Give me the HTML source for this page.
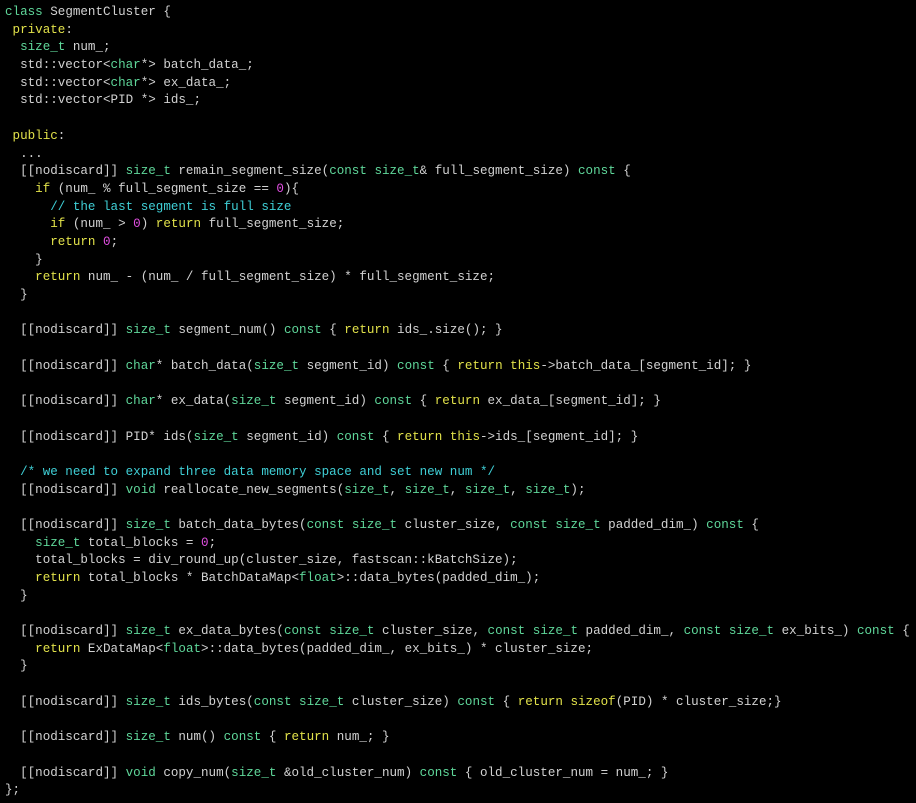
<!DOCTYPE html>
<html><head><meta charset="utf-8"><style>
html,body{margin:0;padding:0;background:#000;width:916px;height:803px;overflow:hidden}
pre{margin:0;padding:4px 0 0 5px;font-family:"Liberation Mono","DejaVu Sans Mono",monospace;font-size:12.57px;line-height:17.68px;color:#d2d2d2;white-space:pre}
.g{color:#5fd79a}.y{color:#e2e24a}.m{color:#e24fe2}.c{color:#3fcfd6}
</style></head><body><pre><span class="g">class</span> SegmentCluster {
 <span class="y">private</span>:
  <span class="g">size_t</span> num_;
  std::vector&lt;<span class="g">char</span>*&gt; batch_data_;
  std::vector&lt;<span class="g">char</span>*&gt; ex_data_;
  std::vector&lt;PID *&gt; ids_;

 <span class="y">public</span>:
  ...
  [[nodiscard]] <span class="g">size_t</span> remain_segment_size(<span class="g">const</span> <span class="g">size_t</span>&amp; full_segment_size) <span class="g">const</span> {
    <span class="y">if</span> (num_ % full_segment_size == <span class="m">0</span>){
      <span class="c">// the last segment is full size</span>
      <span class="y">if</span> (num_ &gt; <span class="m">0</span>) <span class="y">return</span> full_segment_size;
      <span class="y">return</span> <span class="m">0</span>;
    }
    <span class="y">return</span> num_ - (num_ / full_segment_size) * full_segment_size;
  }

  [[nodiscard]] <span class="g">size_t</span> segment_num() <span class="g">const</span> { <span class="y">return</span> ids_.size(); }

  [[nodiscard]] <span class="g">char</span>* batch_data(<span class="g">size_t</span> segment_id) <span class="g">const</span> { <span class="y">return</span> <span class="y">this</span>-&gt;batch_data_[segment_id]; }

  [[nodiscard]] <span class="g">char</span>* ex_data(<span class="g">size_t</span> segment_id) <span class="g">const</span> { <span class="y">return</span> ex_data_[segment_id]; }

  [[nodiscard]] PID* ids(<span class="g">size_t</span> segment_id) <span class="g">const</span> { <span class="y">return</span> <span class="y">this</span>-&gt;ids_[segment_id]; }

  <span class="c">/* we need to expand three data memory space and set new num */</span>
  [[nodiscard]] <span class="g">void</span> reallocate_new_segments(<span class="g">size_t</span>, <span class="g">size_t</span>, <span class="g">size_t</span>, <span class="g">size_t</span>);

  [[nodiscard]] <span class="g">size_t</span> batch_data_bytes(<span class="g">const</span> <span class="g">size_t</span> cluster_size, <span class="g">const</span> <span class="g">size_t</span> padded_dim_) <span class="g">const</span> {
    <span class="g">size_t</span> total_blocks = <span class="m">0</span>;
    total_blocks = div_round_up(cluster_size, fastscan::kBatchSize);
    <span class="y">return</span> total_blocks * BatchDataMap&lt;<span class="g">float</span>&gt;::data_bytes(padded_dim_);
  }

  [[nodiscard]] <span class="g">size_t</span> ex_data_bytes(<span class="g">const</span> <span class="g">size_t</span> cluster_size, <span class="g">const</span> <span class="g">size_t</span> padded_dim_, <span class="g">const</span> <span class="g">size_t</span> ex_bits_) <span class="g">const</span> {
    <span class="y">return</span> ExDataMap&lt;<span class="g">float</span>&gt;::data_bytes(padded_dim_, ex_bits_) * cluster_size;
  }

  [[nodiscard]] <span class="g">size_t</span> ids_bytes(<span class="g">const</span> <span class="g">size_t</span> cluster_size) <span class="g">const</span> { <span class="y">return</span> <span class="y">sizeof</span>(PID) * cluster_size;}

  [[nodiscard]] <span class="g">size_t</span> num() <span class="g">const</span> { <span class="y">return</span> num_; }

  [[nodiscard]] <span class="g">void</span> copy_num(<span class="g">size_t</span> &amp;old_cluster_num) <span class="g">const</span> { old_cluster_num = num_; }
};</pre></body></html>
